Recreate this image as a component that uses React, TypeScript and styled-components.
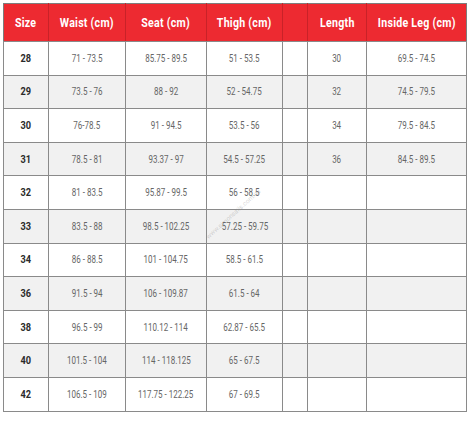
import React from "react";
import styled, { createGlobalStyle } from "styled-components";

const Global = createGlobalStyle`
  html, body { margin: 0; padding: 0; background: #ffffff; }
  body { font-family: Roboto, "Liberation Sans", Arial, sans-serif; }
`;

const Wrap = styled.div`
  position: relative;
  padding: 3px 0 0 3px;
  width: 474px;
  height: 427px;
  box-sizing: border-box;
`;

const Table = styled.table`
  border-collapse: collapse;
  table-layout: fixed;
  width: 463px;
  border: 1px solid #7d7d7d;
`;

const Th = styled.th`
  background: #ed2a31;
  color: #ffffff;
  font-weight: 700;
  font-size: 12.5px;
  height: 37px;
  padding: 0;
  text-align: center;
  white-space: nowrap;
  border-left: 1px solid #c92228;
  border-bottom: 1px solid #8a8a8a;
  letter-spacing: 0.3px;
  &:first-child { border-left: none; }
`;

const Narrow = styled.span<{ $scale: number }>`
  display: inline-block;
  white-space: nowrap;
  transform: scaleX(${(p) => p.$scale});
`;

const Tr = styled.tr<{ $alt: boolean }>`
  background: ${(p) => (p.$alt ? "#f1f1f1" : "#ffffff")};
`;

const Td = styled.td<{ $bold?: boolean }>`
  height: 32.6px;
  padding: 0;
  text-align: center;
  white-space: nowrap;
  border: 1px solid #8a8a8a;
  font-size: 10px;
  font-weight: ${(p) => (p.$bold ? 700 : 400)};
  color: ${(p) => (p.$bold ? "#2a2a2a" : "#666666")};
`;

const Watermark = styled.div`
  position: absolute;
  left: 198px;
  top: 210px;
  font-size: 6.5px;
  color: rgba(150, 150, 150, 0.4);
  transform: rotate(-42deg);
  font-family: Roboto, sans-serif;
  pointer-events: none;
`;

const widths = [45, 77, 81, 76, 25, 59, 100];
const headers = ["Size", "Waist (cm)", "Seat (cm)", "Thigh (cm)", "", "Length", "Inside Leg (cm)"];

const rows: string[][] = [
  ["28", "71 - 73.5", "85.75 - 89.5", "51 - 53.5", "", "30", "69.5 - 74.5"],
  ["29", "73.5 - 76", "88 - 92", "52 - 54.75", "", "32", "74.5 - 79.5"],
  ["30", "76-78.5", "91 - 94.5", "53.5 - 56", "", "34", "79.5 - 84.5"],
  ["31", "78.5 - 81", "93.37 - 97", "54.5 - 57.25", "", "36", "84.5 - 89.5"],
  ["32", "81 - 83.5", "95.87 - 99.5", "56 - 58.5", "", "", ""],
  ["33", "83.5 - 88", "98.5 - 102.25", "57.25 - 59.75", "", "", ""],
  ["34", "86 - 88.5", "101 - 104.75", "58.5 - 61.5", "", "", ""],
  ["36", "91.5 - 94", "106 - 109.87", "61.5 - 64", "", "", ""],
  ["38", "96.5 - 99", "110.12 - 114", "62.87 - 65.5", "", "", ""],
  ["40", "101.5 - 104", "114 - 118.125", "65 - 67.5", "", "", ""],
  ["42", "106.5 - 109", "117.75 - 122.25", "67 - 69.5", "", "", ""],
];

export default function App() {
  return (
    <>
      <Global />
      <Wrap>
        <Table>
          <colgroup>
            {widths.map((w, i) => (
              <col key={i} style={{ width: w }} />
            ))}
          </colgroup>
          <thead>
            <tr>
              {headers.map((h, i) => (
                <Th key={i}>{h && <Narrow $scale={0.85}>{h}</Narrow>}</Th>
              ))}
            </tr>
          </thead>
          <tbody>
            {rows.map((r, ri) => (
              <Tr key={ri} $alt={ri % 2 === 1}>
                {r.map((c, ci) => (
                  <Td key={ci} $bold={ci === 0}>
                    {c && <Narrow $scale={ci === 0 ? 0.92 : 0.8}>{c}</Narrow>}
                  </Td>
                ))}
              </Tr>
            ))}
          </tbody>
        </Table>
        <Watermark>www.simonsails.com.au</Watermark>
      </Wrap>
    </>
  );
}
